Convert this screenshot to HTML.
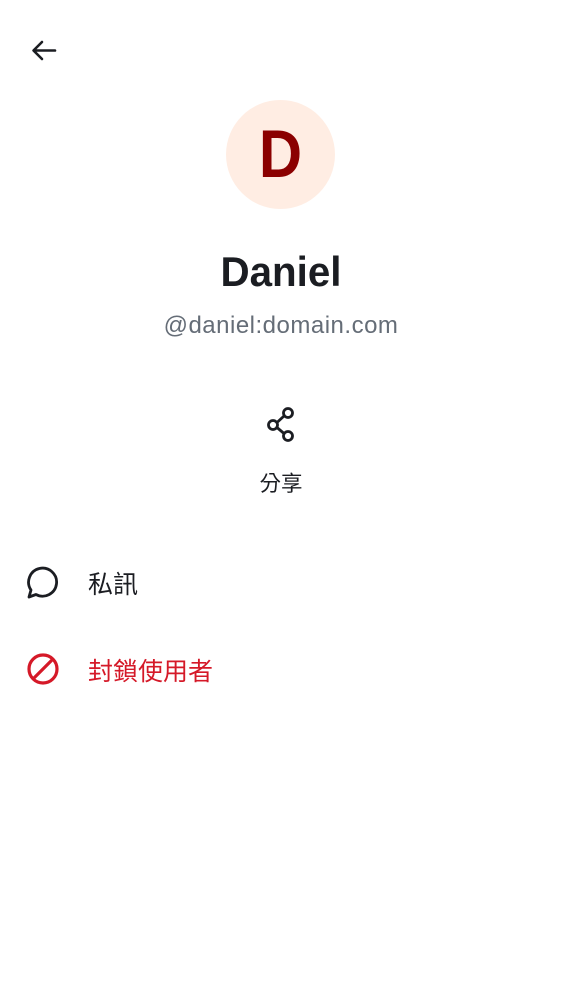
<!DOCTYPE html>
<html><head><meta charset="utf-8"><style>
body{margin:0;width:562px;height:1000px;background:#fff;position:relative;font-family:"Liberation Sans","Noto Sans CJK TC",sans-serif;overflow:hidden}
.a{position:absolute}
</style></head><body>
<svg class="a" style="left:29px;top:37px" width="28" height="28" viewBox="0 0 28 28"><path d="M26 13.5H5M13 5L4.5 13.5L13 22" fill="none" stroke="#1b1d22" stroke-width="2.6" stroke-linecap="round" stroke-linejoin="round"/></svg>
<div class="a" style="left:226px;top:100px;width:109px;height:109px;border-radius:50%;background:#ffede3"></div>
<div class="a" style="left:226px;top:100px;width:109px;height:109px;line-height:109px;text-align:center;font-weight:bold;font-size:68px;color:#8b0000;transform:scaleX(0.88)">D</div>
<div class="a" style="left:0;width:562px;top:248px;text-align:center;font-weight:bold;font-size:42px;color:#1b1d22;transform:scaleX(0.96)">Daniel</div>
<div class="a" style="left:0;width:562px;top:312px;text-align:center;font-size:24px;letter-spacing:0.5px;color:#656d77">@daniel:domain.com</div>
<svg class="a" style="left:264px;top:406px" width="34" height="38" viewBox="0 0 34 38"><g fill="none" stroke="#1b1d22" stroke-width="2.8"><circle cx="24" cy="7" r="4.5"/><circle cx="9" cy="19" r="4.5"/><circle cx="24" cy="30" r="4.5"/><path d="M13 16.5L20 10M13 21.5L20 27.5"/></g></svg>
<div class="a" style="left:0;width:562px;top:467px;text-align:center;font-size:21.5px;color:#1b1d22">分享</div>
<svg class="a" style="left:26px;top:565px" width="34" height="34" viewBox="0 0 34 34"><path d="M3 32L5 25A14 14 0 1 1 10 29.5Z" fill="none" stroke="#1b1d22" stroke-width="2.8" stroke-linejoin="round"/></svg>
<div class="a" style="left:88px;top:565px;font-size:25px;color:#1b1d22">私訊</div>
<svg class="a" style="left:26px;top:652px" width="34" height="34" viewBox="0 0 34 34"><circle cx="17" cy="17" r="14" fill="none" stroke="#d51928" stroke-width="3.2"/><path d="M7 27L27 7" stroke="#d51928" stroke-width="3.2"/></svg>
<div class="a" style="left:88px;top:652px;font-size:25px;color:#d51928">封鎖使用者</div>
</body></html>
